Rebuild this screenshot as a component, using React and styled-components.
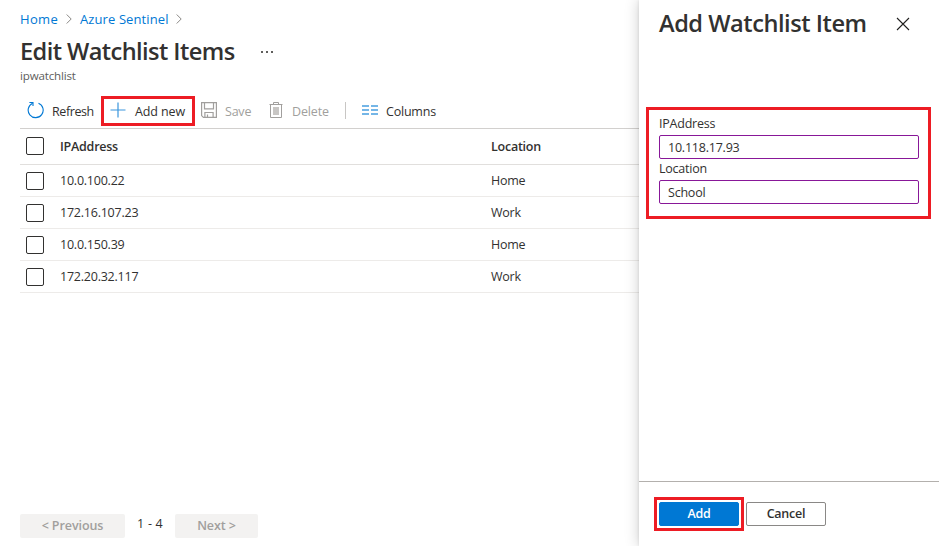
import React from "react";
import styled, { createGlobalStyle } from "styled-components";

const GlobalStyle = createGlobalStyle`
  * { box-sizing: border-box; }
  body {
    margin: 0;
    background: #fff;
    color: #323130;
    font-family: "Open Sans", "Noto Sans", sans-serif;
    font-size: 12.5px;
    line-height: 18px;
    letter-spacing: -0.22px;
    overflow: hidden;
  }
  button, input { font: inherit; letter-spacing: inherit; color: inherit; }
  h1, h2 { margin: 0; }
`;

const Page = styled.div`
  display: grid;
  grid-template-columns: 639px 300px;
  width: 939px;
  height: 546px;
  overflow: hidden;
`;

const Main = styled.main`
  display: flex;
  flex-direction: column;
  padding: 10px 0 8px 20px;
`;

const Breadcrumb = styled.nav`
  display: flex;
  align-items: center;
  height: 18px;
  font-size: 13px;
`;

const Crumb = styled.a`
  color: #0078d4;
  width: ${(p) => p.$width}px;
  letter-spacing: ${(p) => p.$spacing}px;
  white-space: nowrap;
`;

const CrumbArrow = styled.svg`
  width: 6px;
  height: 10px;
  margin: 0 8px;
  fill: none;
  stroke: #8a8886;
`;

const TitleRow = styled.div`
  display: flex;
  align-items: center;
  height: 32px;
  margin-top: 8px;
`;

const Title = styled.h1`
  width: 241px;
  padding-bottom: 2px;
  font-size: 23.6px;
  font-weight: 550;
  line-height: 30px;
  letter-spacing: -0.58px;
  white-space: nowrap;
`;

const MoreIcon = styled.svg`
  width: 12px;
  height: 2px;
  fill: #605e5c;
`;

const Subtitle = styled.div`
  height: 16px;
  font-size: 11.6px;
  line-height: 16px;
  letter-spacing: -0.18px;
  color: #605e5c;
`;

const Toolbar = styled.div`
  display: flex;
  align-items: center;
  height: 45px;
  padding-top: 9px;
  border-bottom: 1px solid #d2d0ce;
`;

const ToolButton = styled.button`
  display: flex;
  align-items: center;
  gap: ${(p) => p.$gap}px;
  width: ${(p) => p.$width}px;
  height: 30px;
  padding: 2px 0 0 ${(p) => p.$inset}px;
  border: ${(p) => (p.$highlighted ? "3px solid #ed1c24" : "0")};
  background: none;
  color: ${(p) => (p.disabled ? "#a19f9d" : "#323130")};
  letter-spacing: ${(p) => p.$spacing || -0.22}px;
  white-space: nowrap;
  svg { flex: none; margin-bottom: 4px; }
`;

const Divider = styled.div`
  width: 1px;
  height: 17px;
  margin: 0 15px 0 2px;
  background: #c8c6c4;
`;

const TableRow = styled.div`
  display: grid;
  grid-template-columns: 40px 431px 1fr;
  align-items: center;
  height: ${(p) => (p.$header ? 36 : 32)}px;
  border-bottom: 1px solid ${(p) => (p.$header ? "#e1dfdd" : "#edebe9")};
  font-weight: ${(p) => (p.$header ? 600 : 400)};
`;

const Cell = styled.span`
  line-height: 18px;
  letter-spacing: ${(p) => (p.$header ? -0.24 : -0.23)}px;
`;

const Checkbox = styled.input`
  appearance: none;
  width: 18px;
  height: 18px;
  margin: ${(p) => (p.$header ? "0 0 1px 6px" : "1px 0 0 6px")};
  border: 1px solid #323130;
  border-radius: 2px;
`;

const Pager = styled.footer`
  display: flex;
  height: 24px;
  margin-top: auto;
`;

const PagerButton = styled.button`
  width: ${(p) => p.$width}px;
  height: 24px;
  padding: 0;
  border: 0;
  border-radius: 2px;
  background: #f3f2f1;
  color: #a19f9d;
  font-weight: 600;
  letter-spacing: -0.08px;
`;

const PageRange = styled.span`
  width: 50px;
  padding-top: 1px;
  text-align: center;
  letter-spacing: 0.2px;
`;

const Panel = styled.aside`
  display: flex;
  flex-direction: column;
  background: #fff;
  box-shadow: 0 0 14px rgba(0, 0, 0, 0.2), 0 0 3px rgba(0, 0, 0, 0.1);
`;

const PanelHeader = styled.header`
  display: flex;
  align-items: center;
  height: 48px;
  padding-left: 20px;
`;

const PanelTitle = styled.h2`
  width: 237px;
  padding-bottom: 2px;
  font-size: 23.6px;
  font-weight: 550;
  line-height: 30px;
  letter-spacing: -0.46px;
  white-space: nowrap;
`;

const CloseButton = styled.button`
  display: flex;
  padding: 0;
  border: 0;
  background: none;
`;

const FieldGroup = styled.div`
  width: 285px;
  height: 112px;
  margin: 59px 0 0 7px;
  padding: 3px 9px 0 10px;
  border: 3px solid #ed1c24;
`;

const Field = styled.label`
  display: block;
  height: 45px;
  line-height: 21px;
`;

const TextInput = styled.input`
  display: block;
  width: 260px;
  height: 24px;
  margin-top: 1px;
  padding: 0 8px;
  border: 1px solid #881798;
  border-radius: 2px;
  outline: none;
  background: #fff;
`;

const PanelFooter = styled.footer`
  display: flex;
  gap: 2px;
  height: 65px;
  margin-top: auto;
  padding: 15px 0 0 15px;
  border-top: 1px solid #b3b0ad;
`;

const PrimaryFrame = styled.div`
  width: 90px;
  height: 34px;
  padding: 2px;
  border: 3px solid #ed1c24;
`;

const ActionButton = styled.button`
  width: 80px;
  height: 24px;
  margin-top: ${(p) => (p.$primary ? 0 : 5)}px;
  padding: 0;
  border: 1px solid ${(p) => (p.$primary ? "#0078d4" : "#8a8886")};
  border-radius: 2px;
  background: ${(p) => (p.$primary ? "#0078d4" : "#fff")};
  color: ${(p) => (p.$primary ? "#fff" : "#323130")};
  font-weight: 600;
`;

const rows = [
  ["10.0.100.22", "Home"],
  ["172.16.107.23", "Work"],
  ["10.0.150.39", "Home"],
  ["172.20.32.117", "Work"],
];

const Chevron = () => (
  <CrumbArrow viewBox="0 0 6 10"><path d="M.7.5 5.2 5 .7 9.5" /></CrumbArrow>
);

const RefreshIcon = () => (
  <svg width="18" height="18" viewBox="0 0 18 18" fill="none" stroke="#0078d4" strokeWidth="1.1">
    <path d="M11.5 2.2A7.5 7.5 0 1 1 5.6 2.3" />
    <path d="M2.4 1.5h3.6v3.6" />
  </svg>
);

const PlusIcon = () => (
  <svg width="16" height="16" viewBox="0 0 16 16" stroke="#3a96dd" strokeWidth="1.2">
    <path d="M8 .5v15M.5 8h15" />
  </svg>
);

const SaveIcon = () => (
  <svg width="16" height="16" viewBox="0 0 16 16" fill="none" stroke="#a19f9d" strokeWidth="1.2">
    <path d="M.6.6h14.8v14.8H2.4L.6 13.6z" />
    <path d="M3.5.8v6h9v-6" />
    <path d="M3.9 15.2v-4.7h8.2v4.7M6.5 12.5v2.7" />
  </svg>
);

const TrashIcon = () => (
  <svg width="14" height="16" viewBox="0 0 14 16" fill="none" stroke="#a19f9d">
    <path d="M.5 2.5h13M4.5 2.5v-2h5v2M1.5 2.5v13h11v-13" />
    <path d="M4 5h6v8H4z" fill="#c8c6c4" stroke="none" />
  </svg>
);

const ColumnsIcon = () => (
  <svg width="16" height="10" viewBox="0 0 16 10" fill="#75b6e7">
    <path d="M0 0h7v2H0zM9 0h7v2H9zM0 4h7v2H0zM9 4h7v2H9zM0 8h7v2H0zM9 8h7v2H9z" />
  </svg>
);

export default function App() {
  return (
    <>
      <GlobalStyle />
      <Page>
        <Main>
          <Breadcrumb>
            <Crumb $width={38} $spacing={0.35}>Home</Crumb>
            <Chevron />
            <Crumb $width={88} $spacing={0.1}>Azure Sentinel</Crumb>
            <Chevron />
          </Breadcrumb>
          <TitleRow>
            <Title>Edit Watchlist Items</Title>
            <MoreIcon viewBox="0 0 12 2">
              <path d="M0 0h2v2H0zM5 0h2v2H5zM10 0h2v2h-2z" />
            </MoreIcon>
          </TitleRow>
          <Subtitle>ipwatchlist</Subtitle>
          <Toolbar>
            <ToolButton $width={81} $inset={7} $gap={7} $spacing={-0.4}><RefreshIcon />Refresh</ToolButton>
            <ToolButton $width={94} $inset={6} $gap={9} $spacing={-0.12} $highlighted><PlusIcon />Add new</ToolButton>
            <ToolButton $width={74} $inset={6} $gap={8} disabled><SaveIcon />Save</ToolButton>
            <ToolButton $width={74} $inset={0} $gap={9} $spacing={-0.15} disabled><TrashIcon />Delete</ToolButton>
            <Divider />
            <ToolButton $width={80} $inset={1} $gap={8}><ColumnsIcon />Columns</ToolButton>
          </Toolbar>
          <TableRow $header>
            <Checkbox type="checkbox" $header />
            <Cell $header>IPAddress</Cell>
            <Cell $header>Location</Cell>
          </TableRow>
          {rows.map(([ip, location]) => (
            <TableRow key={ip}>
              <Checkbox type="checkbox" />
              <Cell>{ip}</Cell>
              <Cell>{location}</Cell>
            </TableRow>
          ))}
          <Pager>
            <PagerButton $width={105} disabled>&lt; Previous</PagerButton>
            <PageRange>1 - 4</PageRange>
            <PagerButton $width={83} disabled>Next &gt;</PagerButton>
          </Pager>
        </Main>
        <Panel>
          <PanelHeader>
            <PanelTitle>Add Watchlist Item</PanelTitle>
            <CloseButton aria-label="Close">
              <svg width="14" height="14" viewBox="0 0 14 14" stroke="#201f1e" strokeWidth="1.1">
                <path d="M1 1l12 12M13 1L1 13" />
              </svg>
            </CloseButton>
          </PanelHeader>
          <FieldGroup>
            <Field>IPAddress<TextInput defaultValue="10.118.17.93" /></Field>
            <Field>Location<TextInput defaultValue="School" /></Field>
          </FieldGroup>
          <PanelFooter>
            <PrimaryFrame><ActionButton $primary>Add</ActionButton></PrimaryFrame>
            <ActionButton>Cancel</ActionButton>
          </PanelFooter>
        </Panel>
      </Page>
    </>
  );
}
